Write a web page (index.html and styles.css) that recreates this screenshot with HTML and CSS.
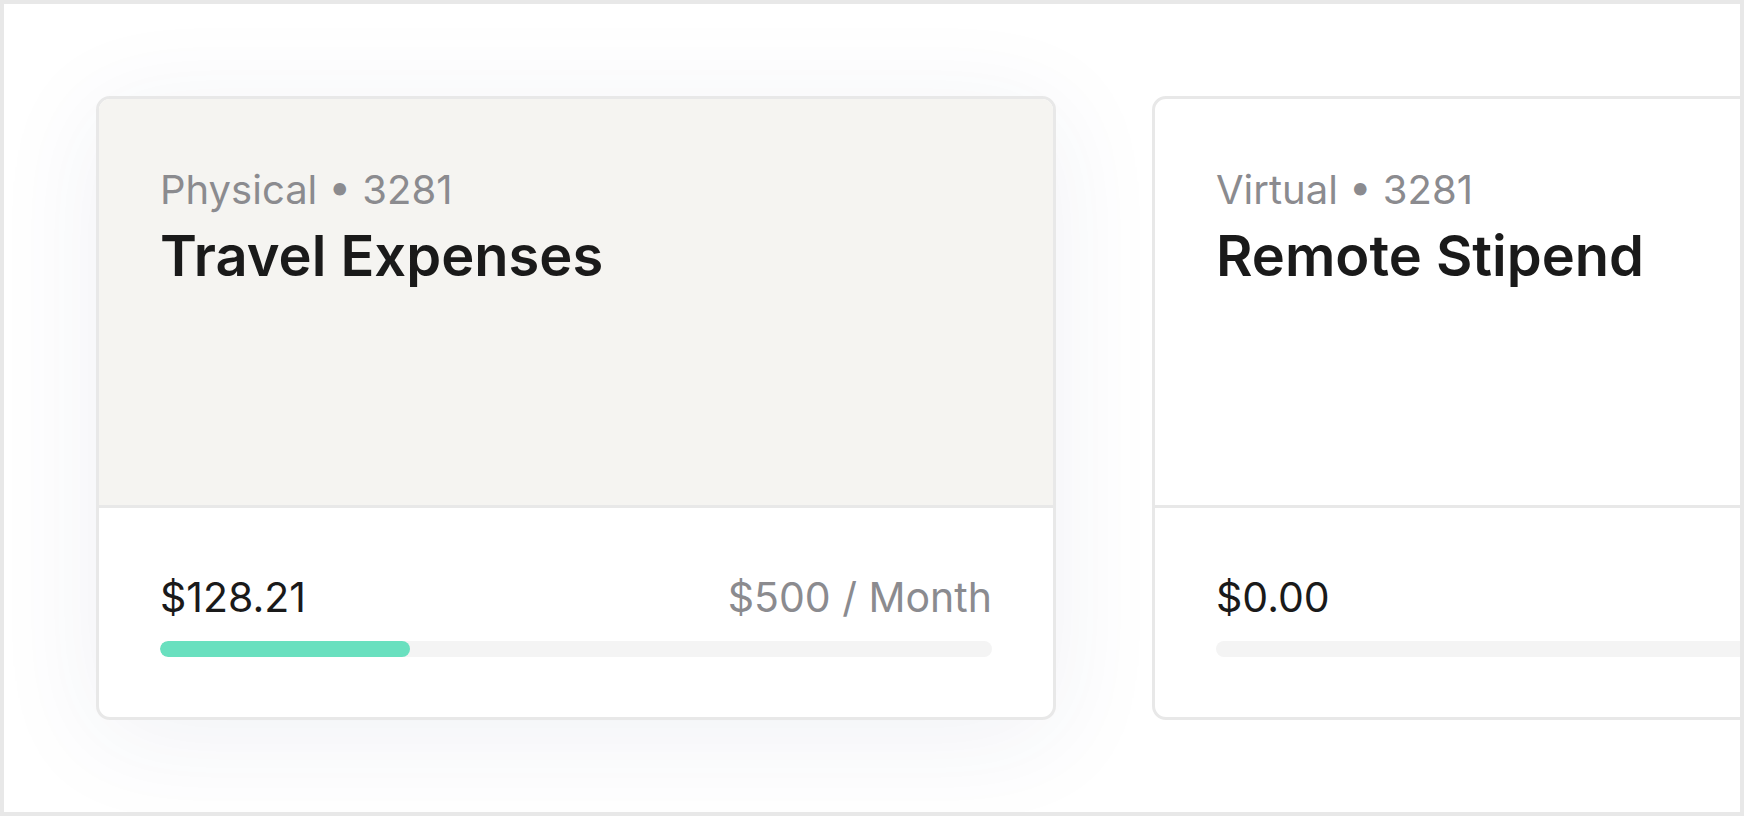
FILE: index.html
```html
<!DOCTYPE html>
<html lang="en">
<head>
<meta charset="utf-8">
<title>Cards</title>
<link rel="stylesheet" href="styles.css">
</head>
<body>
<div class="frame">
  <div class="row">
    <div class="card card-active">
      <div class="card-top">
        <div class="meta">Physical • 3281</div>
        <div class="title">Travel Expenses</div>
      </div>
      <div class="card-bottom">
        <div class="amounts">
          <span class="spent">$128.21</span>
          <span class="limit">$500 / Month</span>
        </div>
        <div class="track"><div class="fill" style="width: 30%"></div></div>
      </div>
    </div>
    <div class="card">
      <div class="card-top">
        <div class="meta">Virtual • 3281</div>
        <div class="title">Remote Stipend</div>
      </div>
      <div class="card-bottom">
        <div class="amounts">
          <span class="spent">$0.00</span>
          <span class="limit"></span>
        </div>
        <div class="track"><div class="fill" style="width: 0%"></div></div>
      </div>
    </div>
  </div>
</div>
</body>
</html>
```
FILE: styles.css
```css
* { box-sizing: border-box; }
html, body { margin: 0; padding: 0; background: #fff; }
body { font-family: Inter, "Noto Sans", sans-serif; }
.frame {
  width: 1744px;
  height: 816px;
  border: 4px solid #e8e8e8;
  overflow: hidden;
  background: #fff;
}
.row {
  display: flex;
  gap: 96px;
  padding: 92px 0 0 92px;
}
.card {
  flex: 0 0 960px;
  height: 624px;
  border: 3px solid #e8e8e8;
  border-radius: 14px;
  background: #fff;
  display: flex;
  flex-direction: column;
  overflow: hidden;
}
.card-active {
  box-shadow: 0 16px 110px rgba(40, 50, 120, 0.07);
}
.card-top {
  flex: 1;
  padding: 61px 61px 0;
}
.card-active .card-top { background: #f5f4f1; }
.meta {
  font-size: 40px;
  line-height: 60px;
  color: #8b8b8f;
}
.title {
  margin-top: 4px;
  font-size: 56px;
  line-height: 65px;
  font-weight: 600;
  color: #1a1a1a;
}
.card-bottom {
  border-top: 3px solid #e8e8e8;
  padding: 59px 61px 60px;
}
.amounts {
  display: flex;
  justify-content: space-between;
  align-items: baseline;
  font-size: 41px;
  line-height: 60px;
}
.spent { color: #1a1a1a; }
.limit { color: #8b8b8f; }
.track {
  margin-top: 14px;
  height: 16px;
  border-radius: 8px;
  background: #f4f4f4;
  overflow: hidden;
}
.fill {
  height: 100%;
  border-radius: 8px;
  background: #69e0bf;
}
```
